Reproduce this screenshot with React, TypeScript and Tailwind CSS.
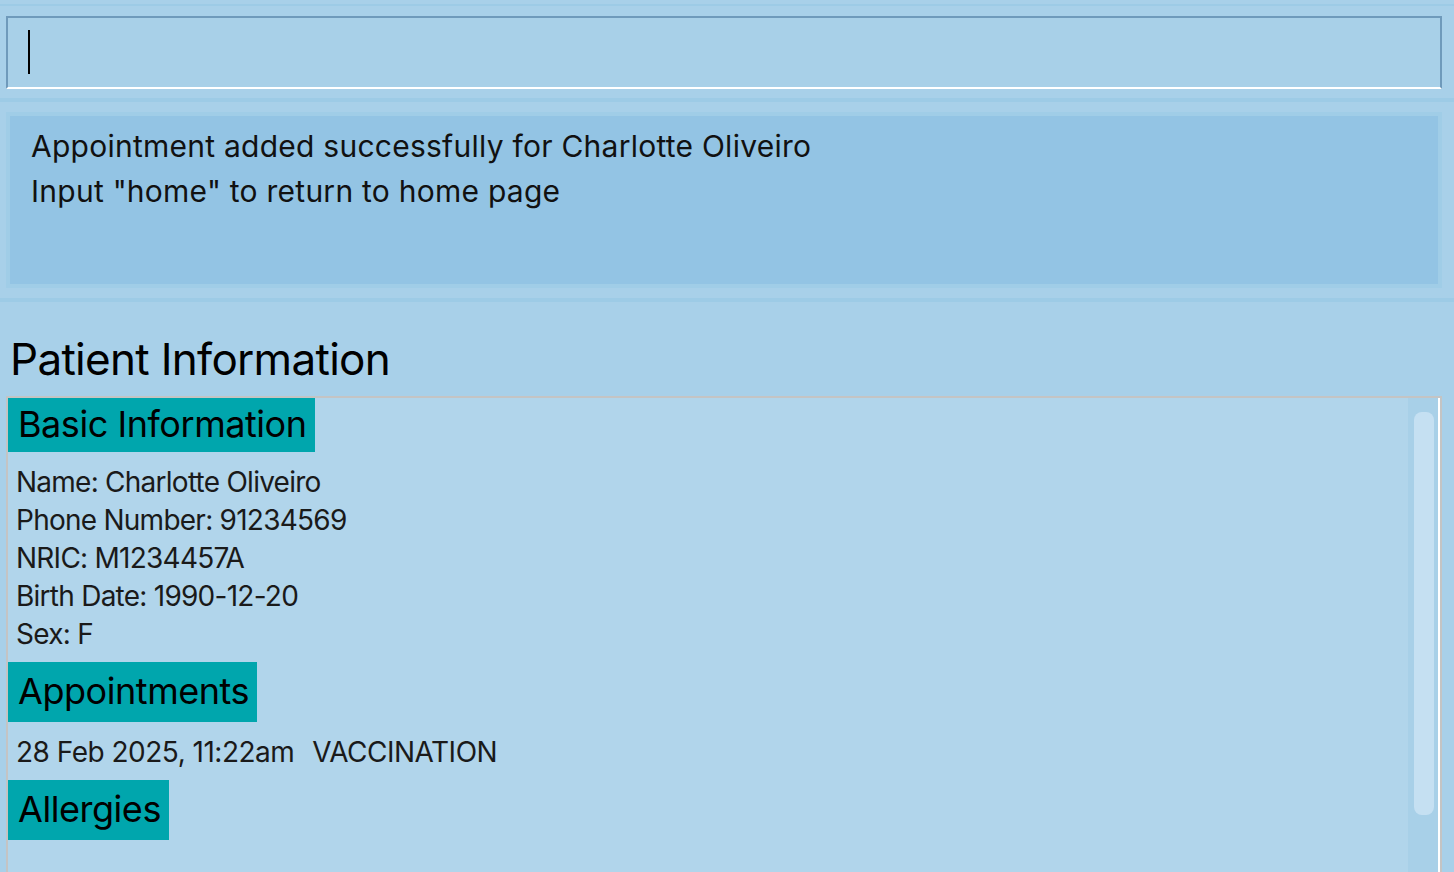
import React from 'react';

const DETAILS = [
  'Name: Charlotte Oliveiro',
  'Phone Number: 91234569',
  'NRIC: M1234457A',
  'Birth Date: 1990-12-20',
  'Sex: F',
];

function SectionHeader({ title, h }: { title: string; h: string }) {
  return (
    <div className={`flex ${h} w-fit items-center bg-[#00a6ad] pb-[3px] pl-[10px] pr-[8px] text-[36px] leading-none tracking-[-0.45px] text-black`}>
      {title}
    </div>
  );
}

export default function App() {
  return (
    <div
      className="h-[872px] w-full overflow-hidden bg-[#a8d0e9] text-black"
      style={{ fontFamily: 'Inter, "Noto Sans", sans-serif' }}
    >
      {/* command box */}
      <div className="pt-[4px]">
        <div className="h-[2px] bg-[#9dcbe6]" />
      </div>
      <div className="mx-[6px] mt-[10px] h-[73px] w-[1436px] border-2 border-[#6f9abb] border-b-white bg-[#a8d0e8] pl-[20px] pt-[12px]">
        <div className="h-[44px] w-[2px] bg-black" />
      </div>
      <div className="mt-[9px] h-[4px] bg-[#9dcbe6]" />

      {/* result display */}
      <div className="mx-[6px] mt-[10px] h-[176px] w-[1436px] border-4 border-[#a0cde7] bg-[#93c4e4] pl-[21px] pt-[8px]">
        <p className="text-[30px] leading-[45px] tracking-[0.25px] text-[#111]">
          Appointment added successfully for Charlotte Oliveiro
        </p>
        <p className="text-[30px] leading-[45px] tracking-[0.25px] text-[#111]">
          Input "home" to return to home page
        </p>
      </div>
      <div className="mt-[10px] h-[4px] bg-[#9dcbe6]" />

      {/* patient info */}
      <div className="flex h-[94px] items-center pl-[10px] pt-[20px]">
        <h1 className="text-[44px] leading-none tracking-[-0.7px]">Patient Information</h1>
      </div>

      <div className="ml-[6px] flex h-[480px] w-[1436px] border-l-2 border-t-2 border-[#c4c4c4] bg-[#b1d5eb]">
        <div className="flex-1">
          <SectionHeader title="Basic Information" h="h-[54px]" />
          <div className="pb-[9px] pl-[8px] pt-[11px] text-[28px] leading-[38px] tracking-[-0.75px] text-[#1a1a1a]">
            {DETAILS.map((d) => (
              <div key={d}>{d}</div>
            ))}
          </div>
          <SectionHeader title="Appointments" h="h-[60px]" />
          <div className="flex gap-[18px] pb-[9px] pl-[8px] pt-[11px] text-[28px] leading-[38px] tracking-[-0.5px] text-[#1a1a1a]">
            <span>28 Feb 2025, 11:22am</span>
            <span>VACCINATION</span>
          </div>
          <SectionHeader title="Allergies" h="h-[60px]" />
        </div>
        <div className="h-full w-[30px] bg-[#a8d0e8] px-[6px] pt-[14px]">
          <div className="h-[403px] w-[20px] rounded-[8px] bg-[#c5e0f2]" />
        </div>
        <div className="h-full w-[2px] bg-white" />
        <div className="h-full w-[2px] bg-[#c4c4c4]" />
      </div>
    </div>
  );
}
